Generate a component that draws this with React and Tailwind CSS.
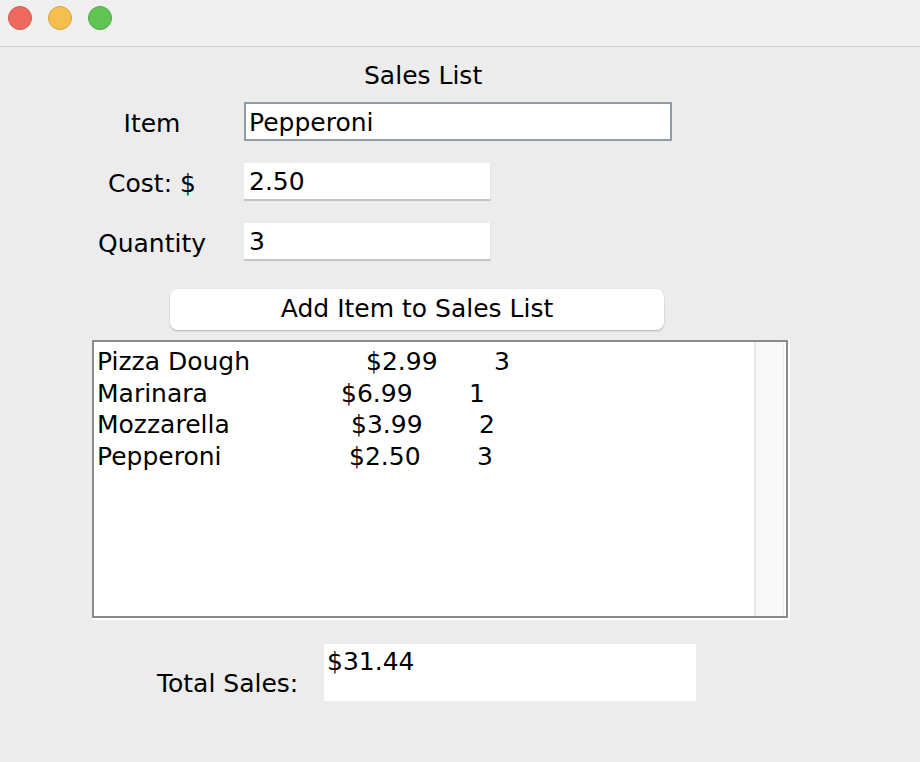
const rows = [
  { name: 'Pizza Dough', price: '$2.99', qty: '3', w: 'w-[269px]' },
  { name: 'Marinara', price: '$6.99', qty: '1', w: 'w-[244px]' },
  { name: 'Mozzarella', price: '$3.99', qty: '2', w: 'w-[254px]' },
  { name: 'Pepperoni', price: '$2.50', qty: '3', w: 'w-[252px]' },
];

function Field({ label, value, wide }) {
  return (
    <div className="flex items-center">
      <div className="w-[120px] ml-[92px] pt-[4px] leading-[30px] text-center">{label}</div>
      <div
        className={
          wide
            ? 'ml-[32px] w-[428px] h-[39px] bg-white border-2 border-[#8e9cac] pl-[3px] pt-[2px] leading-[33px]'
            : 'ml-[32px] w-[247px] h-[38px] bg-white border-b-2 border-b-[#c4c4c4] border-r border-r-[#e2e2e2] pl-[5px] pt-[2px] leading-[34px]'
        }
      >
        {value}
      </div>
    </div>
  );
}

export default function App() {
  return (
    <div
      className="w-[920px] h-[762px] bg-[#ececec] text-black text-[25px] leading-[30px]"
      style={{ fontFamily: '"DejaVu Sans", sans-serif' }}
    >
      <div className="h-[47px] bg-[#efefef] border-b border-[#cdcdcd] flex items-start gap-[16px] pl-[8px] pt-[6px]">
        <span className="w-[24px] h-[24px] rounded-full bg-[#ee6a5f] border border-[#d5564c]" />
        <span className="w-[24px] h-[24px] rounded-full bg-[#f5bf4f] border border-[#d9a23b]" />
        <span className="w-[24px] h-[24px] rounded-full bg-[#61c554] border border-[#4eab41]" />
      </div>

      <div className="pt-[14px] flex flex-col">
        <div className="ml-[364px] leading-[30px]">Sales List</div>

        <div className="mt-[11px] flex flex-col gap-[22px]">
          <Field label="Item" value="Pepperoni" wide />
          <Field label="Cost: $" value="2.50" />
          <Field label="Quantity" value="3" />
        </div>

        <div className="mt-[28px] ml-[170px] w-[494px] h-[41px] bg-white rounded-[8px] shadow-[0_1px_2px_rgba(0,0,0,0.25)] text-center leading-[40px]">
          Add Item to Sales List
        </div>

        <div className="mt-[10px] ml-[92px] w-[698px] h-[280px] border-b-2 border-r-2 border-white">
          <div className="w-[696px] h-[278px] border-2 border-[#8a8a8a] bg-white flex">
            <div className="flex-1 pl-[3px] pt-[4px] leading-[31.7px]">
              {rows.map((r) => (
                <div key={r.name} className="flex whitespace-nowrap">
                  <span className={r.w}>{r.name}</span>
                  <span className="w-[128px]">{r.price}</span>
                  <span>{r.qty}</span>
                </div>
              ))}
            </div>
            <div className="w-[30px] h-full bg-[#f8f8f8] border-l-2 border-[#e6e6e6] border-r border-r-[#ececec] mr-[2px]" />
          </div>
        </div>

        <div className="mt-[24px] flex items-start">
          <div className="ml-[157px] w-[167px] mt-[25px] leading-[30px]">Total Sales:</div>
          <div className="w-[372px] h-[57px] bg-white pl-[3px] pt-[3px] leading-[30px]">$31.44</div>
        </div>
      </div>
    </div>
  );
}
